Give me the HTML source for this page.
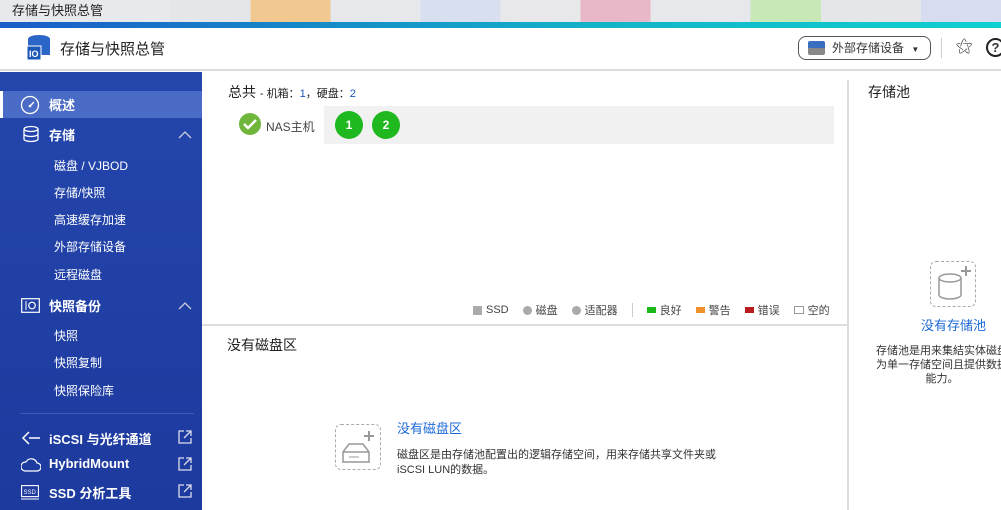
<!DOCTYPE html>
<html><head><meta charset="utf-8"><style>
*{margin:0;padding:0;box-sizing:border-box}
body{width:1001px;height:510px;overflow:hidden;position:relative;background:#fff;font-family:"Liberation Sans","Noto Sans CJK SC",sans-serif;color:#333}
.abs{position:absolute}
#top{left:0;top:0;width:1001px;height:22px;background:linear-gradient(90deg,#e4e6ea 0,#e4e6ea 25%,#f0c890 25%,#f0c890 33%,#e6e8ec 33%,#e6e8ec 42%,#d8e0f0 42%,#d8e0f0 50%,#e8e8ea 50%,#e8e8ea 58%,#e8b8c8 58%,#e8b8c8 65%,#e6e8ec 65%,#e6e8ec 75%,#c8e8b8 75%,#c8e8b8 82%,#e4e6ea 82%,#e4e6ea 92%,#d8dcf0 92%)}
#top span{position:absolute;left:0;top:0;height:22px;width:170px;background:#e8e9ec;font-size:13px;line-height:22px;padding-left:12px;color:#222}
#grad{left:0;top:22px;width:1001px;height:6px;background:linear-gradient(90deg,#1a5cc8,#12b4c8 60%,#10d0d0)}
#hdr{left:0;top:28px;width:1001px;height:43px;border-bottom:2px solid #dcdcdc}
#side{left:0;top:72px;width:202px;height:438px;background:linear-gradient(180deg,#2446ad,#1d3a9e)}
.si{position:absolute;left:0;width:202px;color:#fff;font-size:13px;font-weight:bold}
.sub{position:absolute;left:54px;color:#fff;font-size:12px}
.legend{font-size:11px;color:#444;display:flex;align-items:center;white-space:nowrap}
.legend i{display:inline-block;margin-right:4px}
.legend b{font-weight:normal;margin-right:14px}
</style></head><body>
<div id="top" class="abs"><span>存储与快照总管</span></div>
<div id="grad" class="abs"></div>
<div id="hdr" class="abs">
 <svg class="abs" style="left:25px;top:6px" width="28" height="28" viewBox="0 0 28 28"><ellipse cx="14" cy="5" rx="11" ry="4" fill="#2a66c8"/><rect x="3" y="5" width="22" height="16" fill="#2a66c8"/><rect x="2" y="12" width="14" height="14" fill="#1c58b8" stroke="#fff" stroke-width="1"/><text x="4" y="23" font-size="9" fill="#fff" font-family="Liberation Sans" font-weight="bold">IO</text></svg>
 <div class="abs" style="left:60px;top:10px;font-size:15px;color:#222">存储与快照总管</div>
 <div class="abs" style="left:798px;top:8px;width:133px;height:24px;border:1px solid #555;border-radius:8px;font-size:12px;line-height:22px;padding-left:33px;color:#333">外部存储设备 <span style="font-size:8px;margin-left:4px">▼</span>
  <div class="abs" style="left:9px;top:4px;width:17px;height:14px;background:linear-gradient(180deg,#3a6ec0 50%,#888 50%);border-radius:2px"></div></div>
 <div class="abs" style="left:941px;top:10px;width:1px;height:20px;background:#ccc"></div>
 <div class="abs" style="left:956px;top:8px;font-size:17px;color:#222">⚝</div>
 <div class="abs" style="left:986px;top:10px;width:19px;height:19px;border:2px solid #222;border-radius:50%;font-size:13px;font-weight:bold;text-align:center;line-height:15px">?</div>
</div>
<div id="side" class="abs">
 <div class="si" style="top:19px;height:27px;background:#4a6cc6;border-left:3px solid #fff"></div>
 <svg class="abs" style="left:20px;top:23px" width="20" height="20"><circle cx="10" cy="10" r="8.5" fill="none" stroke="#fff" stroke-width="1.3"/><line x1="10" y1="11" x2="14" y2="7" stroke="#fff" stroke-width="1.3"/><circle cx="10" cy="11" r="1.3" fill="#fff"/></svg>
 <div class="si" style="top:23px;left:49px;width:auto">概述</div>
 <svg class="abs" style="left:22px;top:53px" width="18" height="18"><ellipse cx="9" cy="4" rx="7" ry="2.5" fill="none" stroke="#fff" stroke-width="1.3"/><path d="M2 4v10c0 1.4 3 2.5 7 2.5s7-1.1 7-2.5V4M2 9c0 1.4 3 2.5 7 2.5s7-1.1 7-2.5" fill="none" stroke="#fff" stroke-width="1.3"/></svg>
 <div class="si" style="top:53px;left:49px;width:auto">存储</div>
 <svg class="abs" style="left:178px;top:58px" width="14" height="9"><path d="M1 8L7 2l6 6" fill="none" stroke="#ccd" stroke-width="1.3"/></svg>
 <div class="sub" style="top:85px">磁盘 / VJBOD</div>
 <div class="sub" style="top:112px">存储/快照</div>
 <div class="sub" style="top:139px">高速缓存加速</div>
 <div class="sub" style="top:166px">外部存储设备</div>
 <div class="sub" style="top:194px">远程磁盘</div>
 <svg class="abs" style="left:21px;top:226px" width="19" height="15"><rect x="0.7" y="0.7" width="17.6" height="13.6" fill="none" stroke="#fff" stroke-width="1.2"/><line x1="5" y1="3" x2="5" y2="12" stroke="#fff"/><circle cx="11" cy="7.5" r="3.3" fill="none" stroke="#fff" stroke-width="1.2"/></svg>
 <div class="si" style="top:224px;left:49px;width:auto">快照备份</div>
 <svg class="abs" style="left:178px;top:229px" width="14" height="9"><path d="M1 8L7 2l6 6" fill="none" stroke="#ccd" stroke-width="1.3"/></svg>
 <div class="sub" style="top:255px">快照</div>
 <div class="sub" style="top:282px">快照复制</div>
 <div class="sub" style="top:310px">快照保险库</div>
 <div class="abs" style="left:20px;top:341px;width:174px;height:1px;background:#3d5cb8"></div>
 <svg class="abs" style="left:21px;top:358px" width="20" height="16"><path d="M8 2L2 8l6 6M8 8h11" fill="none" stroke="#fff" stroke-width="1.5"/></svg>
 <div class="si" style="top:357px;left:49px;width:auto">iSCSI 与光纤通道</div>
 <svg class="abs" style="left:21px;top:386px" width="20" height="14"><path d="M4 13h12a4 4 0 0 0 0-8 6 6 0 0 0-11-1 4.5 4.5 0 0 0-1 9z" fill="none" stroke="#fff" stroke-width="1.2"/></svg>
 <div class="si" style="top:384px;left:49px;width:auto">HybridMount</div>
 <svg class="abs" style="left:21px;top:413px" width="18" height="15"><rect x="0.6" y="0.6" width="16.8" height="11" fill="none" stroke="#fff" stroke-width="1.1"/><text x="2.5" y="9" font-size="6" fill="#fff" font-family="Liberation Sans">SSD</text><line x1="0" y1="14" x2="18" y2="14" stroke="#fff"/></svg>
 <div class="si" style="top:411px;left:49px;width:auto">SSD 分析工具</div>
 <svg class="abs" style="left:178px;top:358px" width="14" height="80"><g fill="none" stroke="#dde" stroke-width="1.3"><path d="M6 1H1v12h12V8M8 1h5v5M13 1L6 8"/><path d="M6 28H1v12h12v-5M8 28h5v5M13 28l-7 7"/><path d="M6 55H1v12h12v-5M8 55h5v5M13 55l-7 7"/></g></svg>
</div>
<div class="abs" style="left:228px;top:82px;font-size:14px;color:#222">总共 <span style="font-size:11px">- 机箱：<span style="color:#1c54b8">1</span>，硬盘：<span style="color:#1c54b8">2</span></span></div>
<svg class="abs" style="left:239px;top:113px" width="22" height="22"><circle cx="11" cy="11" r="11" fill="#6fb63a"/><path d="M5 11l4 4 8-8" fill="none" stroke="#fff" stroke-width="2.5"/></svg>
<div class="abs" style="left:266px;top:118px;font-size:12px;color:#444">NAS主机</div>
<div class="abs" style="left:324px;top:106px;width:510px;height:38px;background:#f1f1f1"></div>
<div class="abs" style="left:335px;top:111px;width:28px;height:28px;border-radius:50%;background:#1fb81f;color:#fff;font-size:12px;font-weight:bold;text-align:center;line-height:28px">1</div>
<div class="abs" style="left:372px;top:111px;width:28px;height:28px;border-radius:50%;background:#1fb81f;color:#fff;font-size:12px;font-weight:bold;text-align:center;line-height:28px">2</div>
<div class="abs legend" style="left:473px;top:302px;height:16px">
<i style="width:9px;height:9px;background:#aaa"></i><b>SSD</b><i style="width:9px;height:9px;border-radius:50%;background:#aaa"></i><b>磁盘</b><i style="width:9px;height:9px;border-radius:50%;background:#aaa"></i><b>适配器</b><i style="width:1px;height:14px;background:#ccc;margin-right:14px"></i><i style="width:9px;height:6px;background:#1cb81c"></i><b>良好</b><i style="width:9px;height:6px;background:#f0902a"></i><b>警告</b><i style="width:9px;height:6px;background:#b81c1c"></i><b>错误</b><i style="width:10px;height:8px;border:1px solid #999"></i><b style="margin:0">空的</b></div>
<div class="abs" style="left:202px;top:324px;width:646px;height:2px;background:#ddd"></div>
<div class="abs" style="left:847px;top:80px;width:2px;height:430px;background:#ddd"></div>
<div class="abs" style="left:227px;top:335px;font-size:14px;color:#222">没有磁盘区</div>
<div class="abs" style="left:335px;top:424px;width:46px;height:46px;border:1px dashed #aaa;border-radius:6px"></div>
<svg class="abs" style="left:335px;top:424px" width="46" height="46"><path d="M34 7v10M29 12h10" stroke="#999" stroke-width="2"/><path d="M8 38V28l6-8h14l6 8v10z M8 28h26" fill="none" stroke="#999" stroke-width="1.5"/><line x1="14" y1="33" x2="24" y2="33" stroke="#999"/></svg>
<div class="abs" style="left:397px;top:418px;font-size:13px;color:#1c6ad8">没有磁盘区</div>
<div class="abs" style="left:397px;top:448px;font-size:11px;color:#333;line-height:15px">磁盘区是由存储池配置出的逻辑存储空间，用来存储共享文件夹或<br>iSCSI LUN的数据。</div>
<div class="abs" style="left:868px;top:82px;font-size:14px;color:#222">存储池</div>
<div class="abs" style="left:930px;top:261px;width:46px;height:46px;border:1px dashed #aaa;border-radius:6px"></div>
<svg class="abs" style="left:930px;top:261px" width="46" height="46"><path d="M36 5v10M31 10h10" stroke="#999" stroke-width="2"/><ellipse cx="20" cy="17" rx="11" ry="4" fill="none" stroke="#999" stroke-width="1.5"/><path d="M9 17v17c0 2 5 4 11 4s11-2 11-4V17" fill="none" stroke="#999" stroke-width="1.5"/></svg>
<div class="abs" style="left:921px;top:315px;font-size:13px;color:#1c6ad8">没有存储池</div>
<div class="abs" style="left:872px;top:344px;width:140px;font-size:11px;color:#333;line-height:14px;text-align:center;white-space:nowrap">存储池是用来集結实体磁盘<br>为单一存储空间且提供数据<br>能力。</div>
</body></html>
